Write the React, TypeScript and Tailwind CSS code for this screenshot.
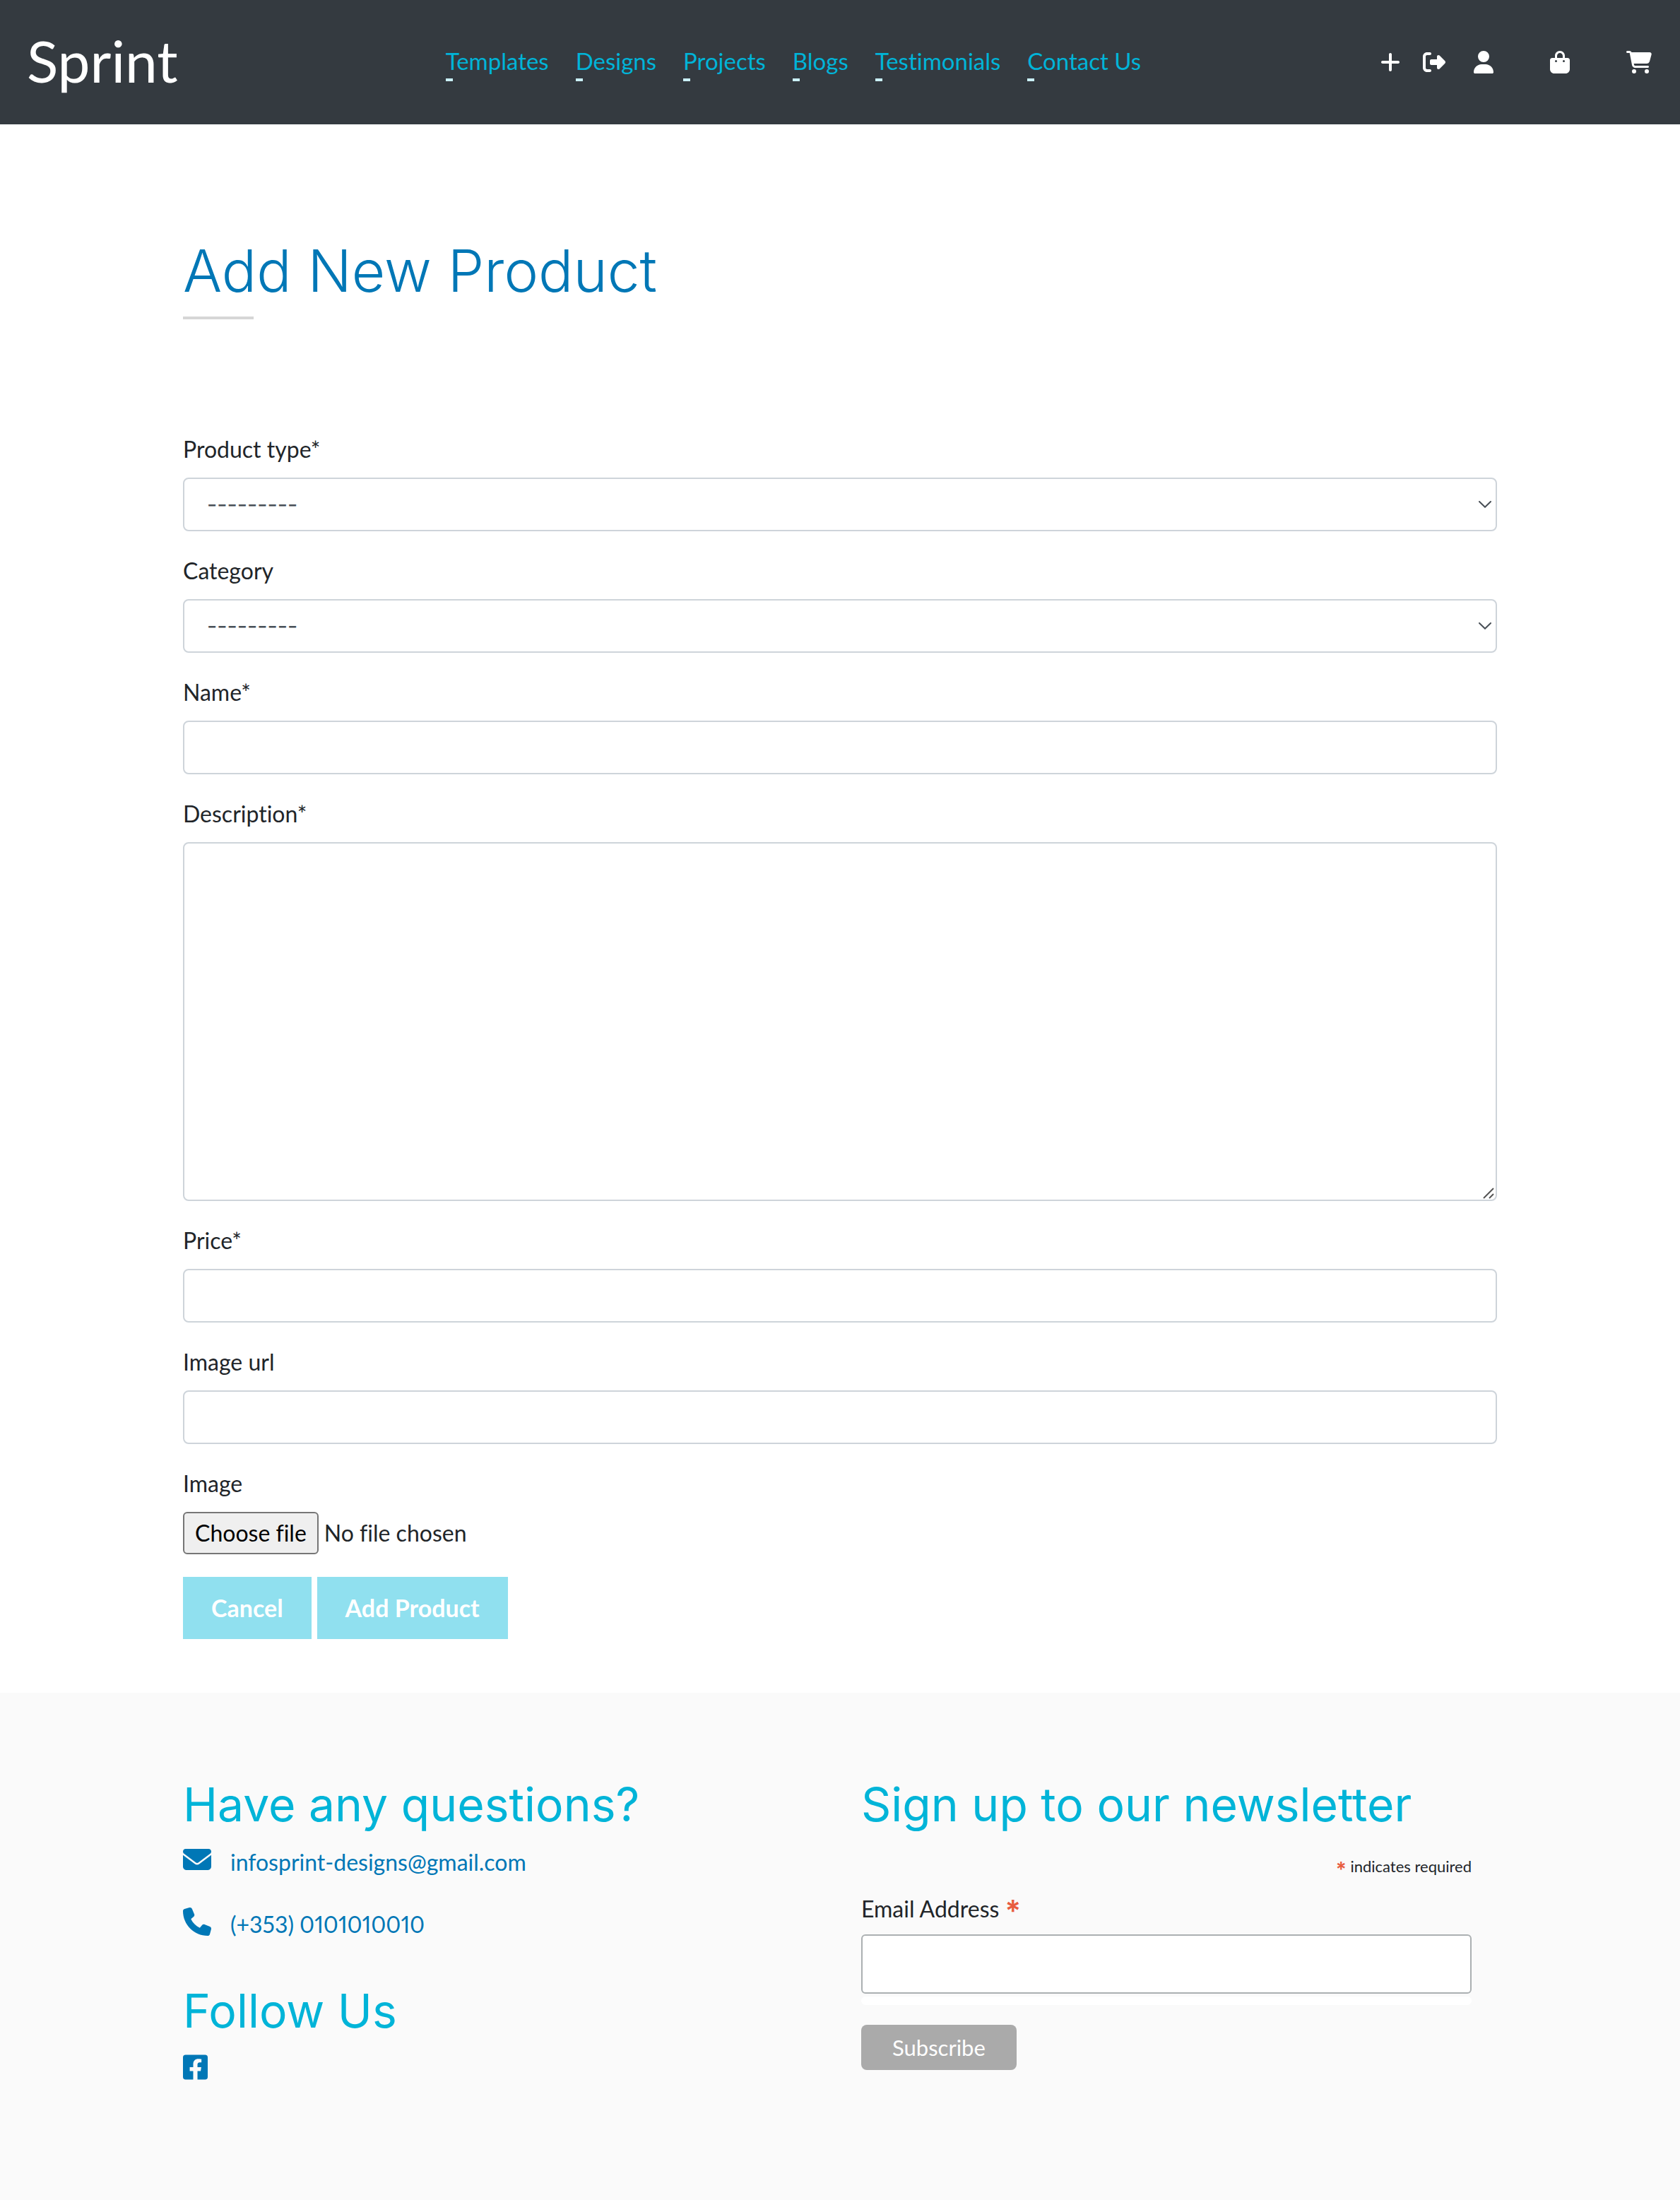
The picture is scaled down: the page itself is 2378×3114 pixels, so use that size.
import React from "react";
import { FaBagShopping, FaCartShopping, FaEnvelope, FaPhone, FaPlus, FaRightFromBracket, FaUser } from "react-icons/fa6";
import { FaFacebookSquare } from "react-icons/fa";

const navLinks = ["Templates", "Designs", "Projects", "Blogs", "Testimonials", "Contact Us"];

const control = "block w-full rounded-lg border-2 border-[#ced4da] bg-white text-[#495057] outline-none";

function Header() {
  return (
    <header className="flex h-44 items-center justify-between bg-[#343a40] pr-10 pl-[38px]">
      <a href="#" className="mr-10 pb-1.5 text-[82px] leading-[80px] text-white">
        Sprint
      </a>
      <nav className="flex gap-[38px] text-[33px]">
        {navLinks.map((name) => (
          <a key={name} href="#" className="flex flex-col text-[#00b4d8]">
            {name}
            <span className="mt-px h-1 w-2.5 bg-[#caf0f8]" />
          </a>
        ))}
      </nav>
      <div className="flex items-center text-white">
        <a href="#" aria-label="Add product" className="mr-8">
          <FaPlus className="h-8 w-7" />
        </a>
        <a href="#" aria-label="Log out" className="mr-10">
          <FaRightFromBracket className="h-8 w-8" />
        </a>
        <div className="flex items-center gap-20">
          <a href="#" aria-label="Profile">
            <FaUser className="h-8 w-7" />
          </a>
          <a href="#" aria-label="Orders">
            <FaBagShopping className="h-8 w-7" />
          </a>
          <a href="#" aria-label="Cart">
            <FaCartShopping className="h-8 w-9" />
          </a>
        </div>
      </div>
    </header>
  );
}

function Field({ id, label, children }: { id: string; label: string; children: React.ReactNode }) {
  return (
    <div className="mb-8">
      <label htmlFor={id} className="mb-4 block">
        {label}
      </label>
      {children}
    </div>
  );
}

function SelectField({ id, label }: { id: string; label: string }) {
  return (
    <Field id={id} label={label}>
      <div className="relative">
        <select id={id} className={`${control} h-[76px] appearance-none px-8 font-[Inter,sans-serif] text-[31px]`}>
          <option>---------</option>
        </select>
        <svg
          viewBox="0 0 18 10"
          className="pointer-events-none absolute top-[33px] right-2 h-2.5 w-[18px] fill-none stroke-[#495057] stroke-2"
        >
          <path d="M1 1l8 7.800 8-7.800" strokeLinecap="round" />
        </svg>
      </div>
    </Field>
  );
}

function InputField({ id, label, type = "text" }: { id: string; label: string; type?: string }) {
  return (
    <Field id={id} label={label}>
      <input id={id} type={type} className={`${control} h-[76px] px-6`} />
    </Field>
  );
}

function ProductForm() {
  return (
    <main className="mx-auto w-full max-w-[1920px] px-[30px] pt-40 pb-[76px]">
      <h1 className="font-[Inter,sans-serif] text-[82px] leading-[96px] font-[350] text-[#0077b6]">Add New Product</h1>
      <div className="mt-4 mb-40 h-1 w-[100px] bg-[#d6d6d6]" />
      <form onSubmit={(e) => e.preventDefault()}>
        <SelectField id="product-type" label="Product type*" />
        <SelectField id="category" label="Category" />
        <InputField id="name" label="Name*" />
        <Field id="description" label="Description*">
          <div className="relative">
            <textarea id="description" className={`${control} h-[508px] resize-none px-6 py-3`} />
            <svg
              viewBox="0 0 16 16"
              className="pointer-events-none absolute right-1 bottom-[3px] size-4 fill-none stroke-[#555] stroke-2"
            >
              <path d="M1 15L15 1M9 15l6-6" />
            </svg>
          </div>
        </Field>
        <InputField id="price" label="Price*" />
        <InputField id="image-url" label="Image url" />
        <div className="mb-8">
          <div className="mb-4">Image</div>
          <label className="flex items-center gap-2">
            <input type="file" className="sr-only" aria-label="Image" />
            <span className="rounded-md border-2 border-[#767676] bg-[#efefef] px-[15px] py-1 text-black">
              Choose file
            </span>
            <span>No file chosen</span>
          </label>
        </div>
        <div className="flex gap-2">
          <button type="button" className="h-[88px] bg-[#90e0ef] px-10 text-[34px] font-bold text-white">
            Cancel
          </button>
          <button type="submit" className="h-[88px] bg-[#90e0ef] px-10 text-[34px] font-bold text-white">
            Add Product
          </button>
        </div>
      </form>
    </main>
  );
}

const footerHeading = "font-[Inter,sans-serif] text-[66px] leading-[80px] text-[#00b4d8]";
const asterisk = "align-[-6px] font-[Inter,sans-serif] leading-none font-semibold text-[#e85c41]";

function Footer() {
  return (
    <footer className="grow bg-[#fafafa] pt-[118px] pb-[168px]">
      <div className="mx-auto grid w-full max-w-[1920px] grid-cols-2">
        <section className="px-[30px] text-[#0077b6]">
          <h2 className={footerHeading}>Have any questions?</h2>
          <div className="mt-[18px] flex flex-col gap-10">
            <a href="#" className="flex gap-[27px]">
              <FaEnvelope className="size-10" />
              infosprint-designs@gmail.com
            </a>
            <a href="#" className="flex gap-[27px] proportional-nums">
              <FaPhone className="size-10" />
              (+353) 0101010010
            </a>
          </div>
          <h2 className={`${footerHeading} mt-[58px]`}>Follow Us</h2>
          <a href="#" aria-label="Facebook" className="mt-5 block w-[35px]">
            <FaFacebookSquare className="h-10 w-[35px]" />
          </a>
        </section>
        <section className="pr-[66px] pl-[30px]">
          <h2 className={footerHeading}>Sign up to our newsletter</h2>
          <form onSubmit={(e) => e.preventDefault()}>
            <p className="mt-8 text-right text-[22px] leading-8">
              <span className={`${asterisk} text-[28px]`}>*</span> indicates required
            </p>
            <label htmlFor="email" className="mt-[18px] block">
              Email Address <span className={`${asterisk} text-[42px]`}>*</span>
            </label>
            <input
              id="email"
              type="email"
              className="mt-3 block h-[84px] w-full rounded-md border-2 border-[#abb0b2] bg-white px-4 outline-none"
            />
            <div className="mt-1 h-3 rounded-md bg-white" />
            <button type="submit" className="mt-7 h-16 rounded-lg bg-[#aaaaaa] px-11 text-[31px] text-white">
              Subscribe
            </button>
          </form>
        </section>
      </div>
    </footer>
  );
}

export default function App() {
  return (
    <div className="flex min-h-screen flex-col bg-white font-[Lato,sans-serif] text-[32px] leading-[48px] text-[#212529] [font-variant-ligatures:none]">
      <Header />
      <ProductForm />
      <Footer />
    </div>
  );
}
